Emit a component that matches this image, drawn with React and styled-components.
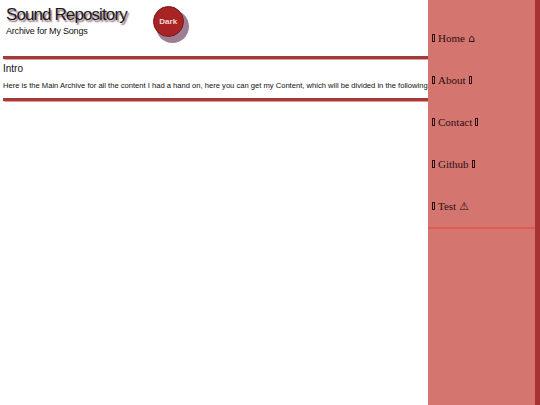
import React from "react";
import styled, { createGlobalStyle } from "styled-components";

const Global = createGlobalStyle`
  html, body { margin: 0; padding: 0; background: #fff; }
  body { font-family: "Liberation Sans", Arial, sans-serif; color: #111; overflow: hidden; }
`;

const Page = styled.div`
  width: 540px;
  height: 405px;
  position: relative;
`;

const Main = styled.main`
  padding: 5px 0 0 3px;
  width: 425px;
`;

const Header = styled.header`
  display: flex;
  align-items: flex-start;
  gap: 26px;
  padding-left: 3px;
  height: 49px;
`;

const TitleBlock = styled.div`
  display: flex;
  flex-direction: column;
`;

const Title = styled.h1`
  margin: 0;
  font-size: 17px;
  letter-spacing: -0.9px;
  font-weight: normal;
  line-height: 20px;
  color: #1a1a1a;
  text-shadow: 1.5px 1.5px 1.5px #8a6c7a;
`;

const Subtitle = styled.p`
  margin: 1px 0 0 0;
  font-size: 9px;
  letter-spacing: -0.2px;
  line-height: 11px;
`;

const DarkButton = styled.button`
  width: 31px;
  height: 31px;
  border-radius: 50%;
  border: 1px solid #7a1818;
  background: #a82424;
  color: #f3d9d9;
  font-family: "Liberation Sans", Arial, sans-serif;
  font-weight: bold;
  font-size: 8px;
  padding: 0;
  margin-top: 1px;
  box-shadow: 4px 5px 0 1px #9d7f93;
`;

const Rule = styled.div`
  height: 3px;
  background: #a53a3a;
  box-shadow: 0 0 1px 0.5px #e09a9a;
  margin: ${(p) => p.$m};
`;

const SectionTitle = styled.h2`
  margin: 4px 0 0 0;
  font-size: 10px;
  font-weight: normal;
  line-height: 12px;
`;

const Para = styled.p`
  margin: 6px 0 0 0;
  font-size: 7.6px;
  line-height: 10px;
  white-space: nowrap;
  color: #111;
`;

const Sidebar = styled.nav`
  position: absolute;
  top: 0;
  right: 0;
  width: 107px;
  height: 405px;
  background: #d4756f;
  border-right: 5px solid #a63232;
`;

const NavList = styled.ul`
  list-style: none;
  margin: 0;
  padding: 17px 0 0 0;
  border-bottom: 2px solid #e05a5a;
`;

const NavItem = styled.li`
  height: 42px;
  display: flex;
  align-items: center;
  padding-left: 4px;
  font-family: "Liberation Serif", "Times New Roman", serif;
  font-size: 11px;
  color: #2a1010;
`;

const Tofu = styled.span`
  display: inline-block;
  width: 3px;
  height: 8px;
  border: 0.5px solid #2a1010;
  margin-right: 3px;
  box-sizing: border-box;
`;

const TofuAfter = styled(Tofu)`
  margin-left: 3px;
  margin-right: 0;
`;

const Glyph = styled.span`
  margin-left: 3px;
  font-family: "DejaVu Sans", sans-serif;
  font-size: 11px;
  line-height: 11px;
`;

const items = [
  { label: "Home", after: "⌂" },
  { label: "About" },
  { label: "Contact" },
  { label: "Github" },
  { label: "Test", after: "⚠" },
];

export default function App() {
  return (
    <Page>
      <Global />
      <Main>
        <Header>
          <TitleBlock>
            <Title>Sound Repository</Title>
            <Subtitle>Archive for My Songs</Subtitle>
          </TitleBlock>
          <DarkButton>Dark</DarkButton>
        </Header>
        <Rule $m="2px 0 0 0" />
        <SectionTitle>Intro</SectionTitle>
        <Para>
          Here is the Main Archive for all the content I had a hand on, here you can get my Content, which will be divided in the following
        </Para>
        <Rule $m="7px 0 0 0" />
      </Main>
      <Sidebar>
        <NavList>
          {items.map((it) => (
            <NavItem key={it.label}>
              <Tofu />
              {it.label}
              {it.after ? <Glyph>{it.after}</Glyph> : <TofuAfter />}
            </NavItem>
          ))}
        </NavList>
      </Sidebar>
    </Page>
  );
}
